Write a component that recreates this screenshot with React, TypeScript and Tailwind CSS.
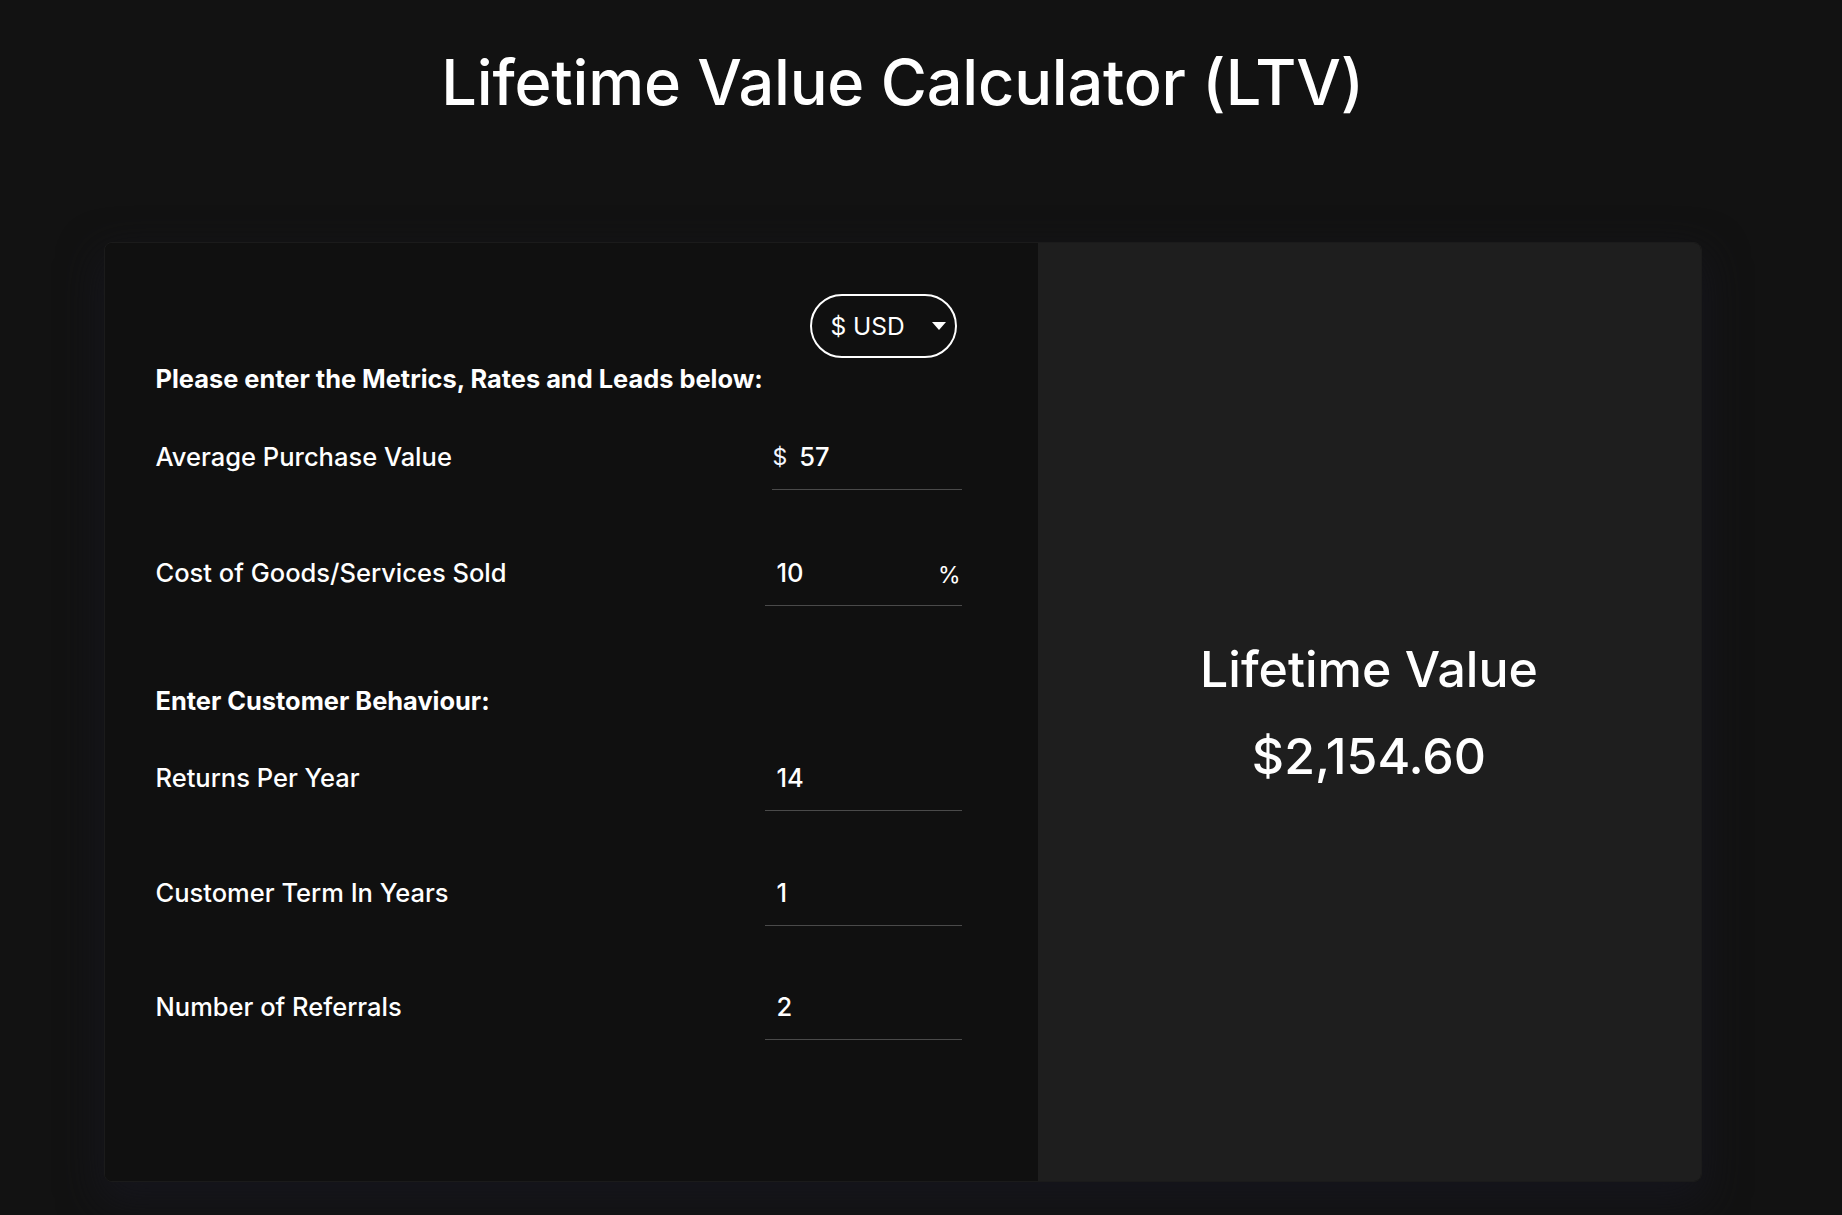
import { useState } from "react";

const font = { fontFamily: "Inter, 'Noto Sans', sans-serif" };

type RowProps = {
  label: string;
  value: string;
  prefix?: string;
  suffix?: string;
  narrow?: boolean;
  className?: string;
};

const InputRow = ({ label, value, prefix, suffix, narrow, className }: RowProps) => {
  return (
    <div className={`flex justify-between ${className ?? ""}`}>
      <span className="pt-[15px] text-[25.5px] leading-[24px] font-medium text-white">
        {label}
      </span>
      <div
        className={`flex h-[60px] items-start border-b border-[#4a4a4a] pt-[15px] text-[25.5px] leading-[24px] font-medium text-white ${
          narrow ? "w-[190px] pl-[1px]" : "w-[197px] pl-[12px] pr-[1px]"
        }`}
      >
        {prefix && (
          <span className="mr-[12px] text-[23px] font-normal text-[#f3f6ff]">{prefix}</span>
        )}
        <span className="flex-1">{value}</span>
        {suffix && <span className="pt-[2px] text-[23px] font-normal">{suffix}</span>}
      </div>
    </div>
  );
};

export default function App() {
  const [currency] = useState("$ USD");

  return (
    <div className="min-h-screen bg-[#121212] text-white" style={font}>
      <div className="flex flex-col items-center pr-[37px]">
        <h1 className="mt-[50px] text-[63px] leading-[64px] font-medium tracking-[-0.2px]">
          Lifetime Value Calculator (LTV)
        </h1>

        <div className="mt-[128px] flex h-[940px] w-[1598px] overflow-hidden rounded-lg border border-[#1b1b1b] shadow-[0_16px_40px_4px_rgba(22,22,30,0.9)]">
          {/* inputs */}
          <div className="flex w-[933px] flex-col bg-[#101010] pl-[51px] pr-[76px] pt-[51px]">
            <div className="flex justify-end pr-[5px]">
              <button className="flex h-[64px] w-[147px] items-center justify-between rounded-full border-2 border-white pl-[19px] pr-[9px] text-[24.5px] font-normal">
                <span>{currency}</span>
                <svg width="14" height="8" viewBox="0 0 14 8">
                  <path d="M0 0 L14 0 L7 8 Z" fill="white" />
                </svg>
              </button>
            </div>

            <h3 className="mt-[5px] text-[25.4px] leading-[32px] font-bold">
              Please enter the Metrics, Rates and Leads below:
            </h3>

            <InputRow className="mt-[35px]" label="Average Purchase Value" value="57" prefix="$" narrow />
            <InputRow className="mt-[56px]" label="Cost of Goods/Services Sold" value="10" suffix="%" />

            <h3 className="mt-[79px] text-[25.4px] leading-[32px] font-bold">
              Enter Customer Behaviour:
            </h3>

            <InputRow className="mt-[34px]" label="Returns Per Year" value="14" />
            <InputRow className="mt-[55px]" label="Customer Term In Years" value="1" />
            <InputRow className="mt-[54px]" label="Number of Referrals" value="2" />
          </div>

          {/* result */}
          <div className="flex flex-1 flex-col items-center justify-center gap-[27px] bg-[#1e1e1e]">
            <h2 className="text-[50px] leading-[60px] font-medium">Lifetime Value</h2>
            <p className="text-[50px] leading-[60px] font-medium">$2,154.60</p>
          </div>
        </div>
      </div>
    </div>
  );
}
